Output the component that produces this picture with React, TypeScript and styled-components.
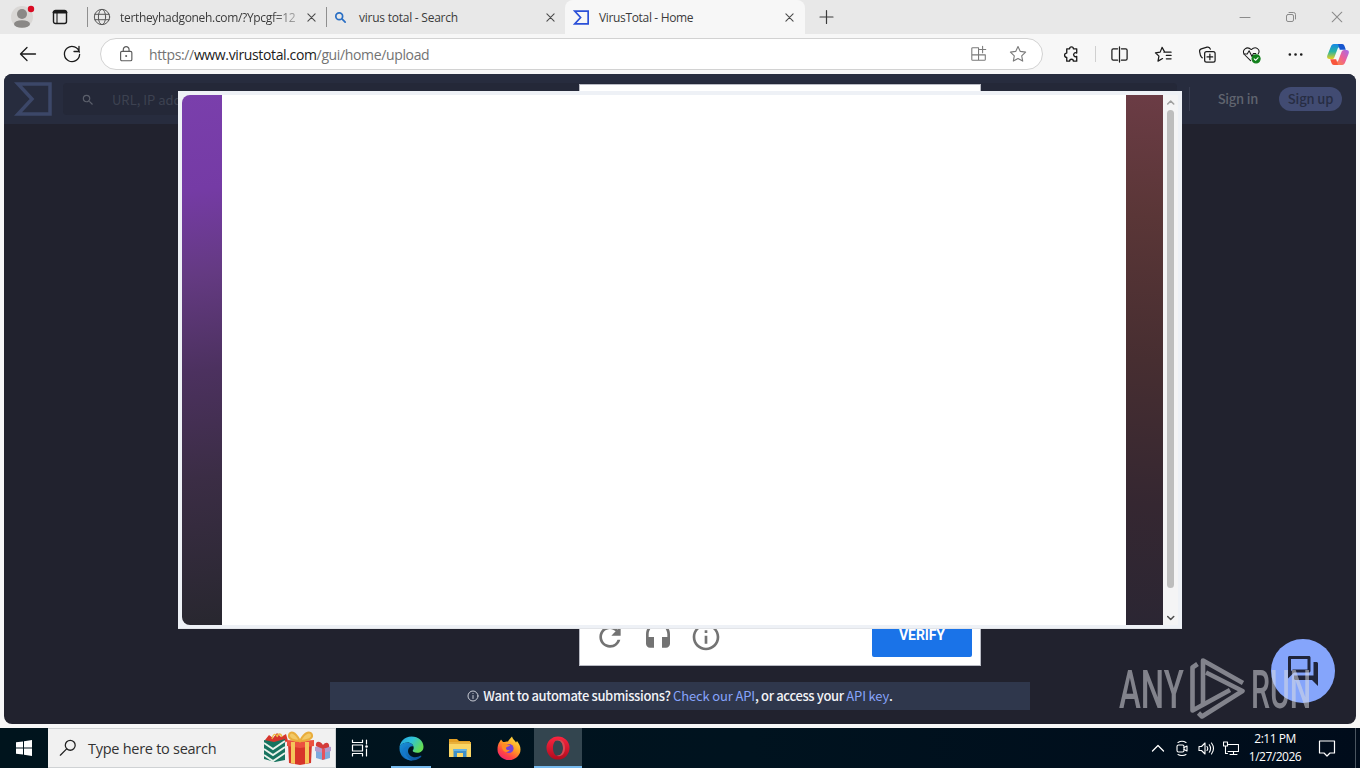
import React from 'react'
import styled, { createGlobalStyle } from 'styled-components'
import { MdHeadset, MdInfoOutline, MdOutlineForum, MdRefresh, MdSearch } from 'react-icons/md'

const GlobalStyle = createGlobalStyle`
  * {
    box-sizing: border-box;
  }
  body {
    margin: 0;
    overflow: hidden;
    font-family: 'Open Sans', 'Noto Sans', sans-serif;
  }
  svg {
    display: block;
    flex-shrink: 0;
  }
`

const Desktop = styled.div`
  position: relative;
  width: 1360px;
  height: 768px;
  display: flex;
  flex-direction: column;
  overflow: hidden;
  background: #f7f7f7;
`

/* ---------- text ---------- */

const Label = styled.span<{ $size?: number; $spacing?: number; $color?: string }>`
  font-size: ${({ $size = 12 }) => $size}px;
  letter-spacing: ${({ $spacing = 0 }) => $spacing}px;
  color: ${({ $color = '#3b3b3b' }) => $color};
  line-height: 20px;
  white-space: nowrap;
`

/* ---------- tab strip ---------- */

const TabStrip = styled.div`
  height: 34px;
  display: flex;
  align-items: center;
  background: #e8e8e8;
`
const StripTools = styled.div`
  width: 87px;
  display: flex;
  align-items: center;
  gap: 16px;
  padding-left: 10px;
`
const Tab = styled.div<{ $width: number; $active?: boolean }>`
  width: ${({ $width }) => $width}px;
  height: 34px;
  display: flex;
  align-items: center;
  padding: 0 ${({ $active }) => ($active ? 11 : 10)}px 0 ${({ $active }) => ($active ? 8 : 5)}px;
  background: ${({ $active }) => ($active ? '#f7f7f7' : 'transparent')};
  border-radius: 8px 8px 0 0;
`
const TabDivider = styled.div`
  width: 1px;
  height: 20px;
  background: #8f8f8f;
`
const TabTitle = styled(Label)<{ $fade?: boolean }>`
  flex: 1;
  margin: 1px 9px 0 ${({ $fade }) => ($fade ? 9 : 10)}px;
  ${({ $fade }) =>
    $fade && 'mask-image: linear-gradient(90deg, #000 85%, rgba(0, 0, 0, 0.3));'}
`
const WindowButtons = styled.div`
  margin-left: auto;
  display: flex;
  align-items: center;
  gap: 34px;
  padding-right: 17px;
`

/* ---------- toolbar ---------- */

const Toolbar = styled.div`
  height: 40px;
  display: flex;
  align-items: center;
  padding: 0 11px 0 18px;
  background: #f7f7f7;
`
const NavButtons = styled.div`
  display: flex;
  gap: 24px;
`
const AddressBar = styled.div`
  width: 943px;
  height: 32px;
  margin-left: 18px;
  display: flex;
  align-items: center;
  padding: 0 14px 0 16px;
  border: 1px solid #d2d2d2;
  border-radius: 16px;
  background: #fff;
`
const Url = styled(Label)`
  flex: 1;
  margin: 1px 0 0 14px;
  b {
    font-weight: 400;
    color: #1b1b1b;
  }
`
const AddressActions = styled.div`
  display: flex;
  align-items: center;
  gap: 20px;
`
const ToolbarIcons = styled.div`
  display: flex;
  align-items: center;
  gap: 25px;
  margin-left: 19px;
  > svg:last-child {
    margin-left: -3px;
  }
`
const ToolbarDivider = styled.div`
  width: 1px;
  height: 16px;
  margin: 0 -11px;
  background: #d0d0d0;
`

/* ---------- page ---------- */

const Page = styled.main`
  height: 650px;
  margin: 0 4px 4px;
  display: flex;
  flex-direction: column;
  align-items: center;
  justify-content: space-between;
  border-radius: 8px;
  overflow: hidden;
  background: #21222e;
  font-family: 'Noto Sans CJK SC', sans-serif;
`
const PageHeader = styled.header`
  width: 100%;
  height: 50px;
  display: flex;
  align-items: center;
  padding: 0 14px 0 10px;
  background: #272c3e;
`
const SearchField = styled.div`
  flex: 1;
  height: 32px;
  margin-left: 11px;
  display: flex;
  align-items: center;
  gap: 17px;
  padding: 1px 0 0 18px;
  border-radius: 4px;
  background: #242838;
`
const HeaderDivider = styled.div`
  width: 1px;
  height: 24px;
  margin-left: 12px;
  background: #363b4e;
`
const HeaderLink = styled.span`
  margin: 0 21px 0 28px;
  font-size: 13px;
  font-weight: 500;
  letter-spacing: -0.25px;
  line-height: 20px;
  color: #60646f;
`
const HeaderButton = styled.span`
  width: 63px;
  height: 24px;
  border-radius: 12px;
  background: #414b72;
  color: #272d43;
  font-size: 13px;
  font-weight: 500;
  letter-spacing: -0.15px;
  line-height: 24px;
  text-align: center;
`
const Banner = styled.div`
  width: 700px;
  height: 28px;
  margin-bottom: 14px;
  display: flex;
  align-items: center;
  justify-content: center;
  gap: 4px;
  background: #2f374c;
  color: #f2f3f7;
  font-size: 13px;
  font-weight: 500;
  line-height: 26px;
  letter-spacing: -0.35px;
  a {
    font-weight: 400;
    letter-spacing: -0.15px;
    color: #87a4fb;
  }
`
const ChatButton = styled.div`
  position: absolute;
  left: 1271px;
  top: 639px;
  width: 64px;
  height: 64px;
  display: flex;
  align-items: center;
  justify-content: center;
  border-radius: 50%;
  background: #85a5fb;
  color: #20253a;
`

/* ---------- overlapping windows ---------- */

const Captcha = styled.div`
  position: absolute;
  left: 579px;
  top: 84px;
  width: 402px;
  height: 582px;
  display: flex;
  align-items: flex-end;
  justify-content: space-between;
  padding: 0 8px 8px 14px;
  border: 1px solid #b9bbc4;
  background: #fff;
`
const CaptchaIcons = styled.div`
  display: flex;
  gap: 16px;
  padding-bottom: 4px;
  color: #737373;
`
const VerifyButton = styled.div`
  width: 100px;
  height: 42px;
  border-radius: 2px;
  background: #1a73e8;
  color: #fff;
  font-family: Roboto, sans-serif;
  font-size: 14px;
  font-weight: 700;
  letter-spacing: -0.1px;
  line-height: 41px;
  text-align: center;
`
const Popup = styled.div`
  position: absolute;
  left: 178px;
  top: 91px;
  width: 1004px;
  height: 538px;
  display: flex;
  padding: 4px;
  background: #eef1f6;
  border-bottom: 1px solid #e2e4e8;
`
const PopupEdge = styled.div<{ $width: number; $left?: boolean }>`
  width: ${({ $width }) => $width}px;
  height: 530px;
  border-radius: ${({ $left }) => ($left ? '8px 0 0 8px' : '0')};
  background: ${({ $left }) =>
    $left
      ? 'linear-gradient(172deg, #7a3fac 0%, #753ba5 18%, #643a82 34%, #4c315f 52%, #3b2d45 72%, #28272f 100%)'
      : 'linear-gradient(184deg, #6b3c45 0%, #5a3637 23%, #472e31 50%, #352731 77%, #2b2633 100%)'};
`
const PopupBody = styled.div`
  flex: 1;
  height: 530px;
  background: #fff;
`
const Scrollbar = styled.div`
  width: 15px;
  height: 530px;
  display: flex;
  flex-direction: column;
  align-items: center;
  padding: 3px 0;
  background: #f4f4f5;
`
const ScrollThumb = styled.div`
  width: 7px;
  height: 478px;
  margin: 4px 0 auto;
  border-radius: 4px;
  background: #bdbdbd;
`
const Watermark = styled.div`
  position: absolute;
  left: 1119px;
  top: 656px;
  width: 194px;
  height: 64px;
  display: flex;
  align-items: center;
  justify-content: space-between;
  opacity: 0.52;
  color: #dcdde2;
`
const WatermarkWord = styled.div<{ $width: number; $scale: number }>`
  width: ${({ $width }) => $width}px;
  padding-top: 3px;
  font-family: Roboto, sans-serif;
  font-size: 53px;
  font-weight: 500;
  line-height: 64px;
  white-space: nowrap;
  transform: scaleX(${({ $scale }) => $scale});
  transform-origin: left center;
`

/* ---------- taskbar ---------- */

const Taskbar = styled.footer`
  height: 40px;
  display: flex;
  align-items: center;
  background: linear-gradient(90deg, #00141d, #00131f 55%, #000c1b);
`
const TaskButton = styled.div<{ $open?: boolean; $active?: boolean }>`
  width: 48px;
  height: 40px;
  margin-right: 1px;
  display: flex;
  align-items: center;
  justify-content: center;
  background: ${({ $active }) => ($active ? '#33454f' : 'transparent')};
  box-shadow: ${({ $open }) => ($open ? 'inset 0 -2px #76b9ed' : 'none')};
`
const StartButton = styled(TaskButton)`
  margin-right: 0;
`
const UnderlinedButton = styled(TaskButton)`
  width: 40px;
  margin: 0 5px 0 6px;
`
const TaskSearch = styled.div`
  width: 288px;
  height: 40px;
  display: flex;
  align-items: center;
  padding: 0 3px 0 11px;
  border: 1px solid #cfd2d4;
  border-left: 0;
  background: #f1f1f1;
`
const SearchText = styled(Label)`
  flex: 1;
  margin: 1px 0 0 11px;
`
const Tray = styled.div`
  margin-left: auto;
  display: flex;
  align-items: center;
  gap: 8px;
`
const Clock = styled.div`
  width: 56px;
  margin-right: 7px;
  display: flex;
  flex-direction: column;
  align-items: center;
  span {
    line-height: 18px;
  }
`
const ShowDesktop = styled.div`
  width: 5px;
  height: 40px;
  margin-left: 11px;
  border-left: 1px solid #4a5560;
`

/* ---------- icons ---------- */

type IconProps = {
  size?: number
  color?: string
  stroke?: number
  box?: number
  children: React.ReactNode
}
const Icon: React.FC<IconProps> = ({
  size = 20,
  color = '#1b1b1b',
  stroke = 1.2,
  box = 20,
  children,
}) => (
  <svg
    width={size}
    height={size}
    viewBox={`0 0 ${box} ${box}`}
    fill="none"
    stroke={color}
    strokeWidth={stroke}
    strokeLinejoin="round"
    strokeLinecap="round"
  >
    {children}
  </svg>
)

const CloseIcon: React.FC<{ size?: number; color?: string; stroke?: number }> = ({
  size = 9,
  color = '#4a4a4a',
  stroke = 1.2,
}) => (
  <Icon size={size} box={10} color={color} stroke={stroke}>
    <path d="M1 1l8 8M9 1l-8 8" />
  </Icon>
)

const Profile = () => (
  <svg width="26" height="26" viewBox="0 0 26 26">
    <circle cx="12" cy="13" r="11" fill="#d9d7d5" />
    <circle cx="12" cy="10" r="5" fill="#8a8886" />
    <ellipse cx="12" cy="20" rx="8" ry="3.8" fill="#8a8886" />
    <circle cx="21" cy="5" r="3.2" fill="#d90b23" />
  </svg>
)

const Sigma: React.FC<{ width: number; height: number; color: string; stroke: number }> = ({
  width,
  height,
  color,
  stroke,
}) => (
  <svg width={width} height={height} viewBox="0 0 38 34" fill="none" stroke={color}>
    <path d="M4 2h32v30H4l14-15z" strokeWidth={stroke} />
  </svg>
)

const Copilot = () => (
  <svg width="22" height="21" viewBox="0 0 22 21">
    <defs>
      <linearGradient id="cpBlue" x1="0" y1="0" x2="0" y2="1">
        <stop offset="0" stopColor="#1688e8" />
        <stop offset="0.5" stopColor="#26b4a4" />
        <stop offset="1" stopColor="#e8cf1c" />
      </linearGradient>
      <linearGradient id="cpPink" x1="1" y1="0" x2="0" y2="1">
        <stop offset="0" stopColor="#a36bef" />
        <stop offset="0.5" stopColor="#ee5f95" />
        <stop offset="1" stopColor="#fc8b3a" />
      </linearGradient>
    </defs>
    <path
      d="M13 0H7C5 0 4.200 1.500 3.600 3.200L.5 11C-.5 13.500.5 15 2.500 15H5c1.500 0 2.200-1 2.700-2.600L10.500 5C11 3.500 12 3 13.500 3z"
      fill="url(#cpBlue)"
    />
    <path d="M11 0h4c1.700 0 2.300 1.200 2.800 2.800l1 3h-6z" fill="#1756cf" />
    <path
      d="M9 21h6c2 0 2.800-1.500 3.400-3.200L21.500 10C22.500 7.500 21.500 6 19.500 6H17c-1.500 0-2.200 1-2.700 2.600L11.500 16C11 17.500 10 18 8.500 18z"
      fill="url(#cpPink)"
    />
    <path d="M11 21H7c-1.700 0-2.300-1.200-2.800-2.800l-1-3h6z" fill="#f8563c" />
  </svg>
)

const Gifts = () => (
  <svg width="70" height="34" viewBox="0 0 70 34">
    <path d="M3 9l4-5 4 3 4-5 4 4 5-3 2 7-6 3H5z" fill="#d6362d" />
    <path
      d="M10 8c1-5 3-6 5-3M15 6c1-4 4-4 5 0"
      fill="none"
      stroke="#efb944"
      strokeWidth="1.300"
    />
    <path d="M2 9l10 2 11-3v21l-10 2-11-3z" fill="#17735f" />
    <path
      d="M2 12l9 6 12-8M2 18l9 6 12-8M2 24l9 6 12-8"
      fill="none"
      stroke="#e9f2ea"
      strokeWidth="1.900"
    />
    <path d="M26 12h24l-1 20-11 2-11-2z" fill="#d7352a" />
    <path d="M25 9l13 1 14-1v6l-14 2-13-2z" fill="#ec5140" />
    <path d="M29 11h4v22l-4-1zM43 11h4v21l-4 1z" fill="#f4c55b" />
    <path
      d="M38 10C33 0 28 0 27 4s5 6 11 6c6 0 13-2 12-6s-7-4-12 6z"
      fill="#f2c966"
      stroke="#e9ad3c"
      strokeWidth="2"
    />
    <path d="M54 17l14 1v9l-7 2-7-2z" fill="#7da9dc" />
    <path d="M53 16l8-2 8 2v4l-8 2-8-2z" fill="#b49acb" />
    <path d="M54 15c-1-5 4-6 7-1 3-4 7-2 6 2l-6 2z" fill="#d43c3b" />
    <path d="M60 18h3v10l-3 1z" fill="#e5525d" />
  </svg>
)

const Edge = () => (
  <svg width="25" height="25" viewBox="0 0 25 25">
    <defs>
      <linearGradient id="edgeTop" x1="0" y1="0" x2="1" y2="0.500">
        <stop offset="0" stopColor="#259fe0" />
        <stop offset="0.500" stopColor="#2fc3da" />
        <stop offset="1" stopColor="#63dc54" />
      </linearGradient>
      <linearGradient id="edgeLow" x1="0" y1="0" x2="1" y2="1">
        <stop offset="0" stopColor="#1a92dc" />
        <stop offset="1" stopColor="#0b4d98" />
      </linearGradient>
    </defs>
    <path
      d="M.5 12.500C.5 5.500 5.500.5 12.500.5c7 0 12 4.600 12 10.200 0 4-3 6-6.300 6-3 0-4.500-1.200-4.500-2 0-.7 1-1.200 1-3C14.700 9 12 6.500 8.500 6.500 4 6.500.5 9.500.5 12.500z"
      fill="url(#edgeTop)"
    />
    <path
      d="M.5 12.500c0-3.500 3.500-6 7.800-6 3 0 5.300 1.500 6.200 4-2-1-5.500.5-5.500 4.500 0 4.500 5 7.500 10 5.800 1.500-.5 2.900-1.300 3.400-.8.500.6-3.600 4.500-9.400 4.500C5.500 24.500.5 19 .5 12.500z"
      fill="url(#edgeLow)"
    />
    <path
      d="M10 10.500c-3.500 2-4.500 6-2.500 9.500 1.300 2.300 3.700 4 6 4.400C7 24.700 2.500 19 4 14c1-2.500 3-3.800 6-3.500z"
      fill="#1479cc"
    />
  </svg>
)

const Folder = () => (
  <svg width="22" height="19" viewBox="0 0 22 19">
    <path d="M0 0h8l2 2h11v4H0z" fill="#e4a024" />
    <path d="M0 3h22v15H0z" fill="#fbd665" />
    <path d="M0 3h22v2H0z" fill="#e9b13c" />
    <path d="M4.500 18v-8h13v8h-3.500v-4H8v4z" fill="#3d8fc9" />
    <path d="M4.500 10h13v2h-13z" fill="#64b3e6" />
  </svg>
)

const Firefox = () => (
  <svg width="24" height="24" viewBox="0 0 24 24">
    <defs>
      <linearGradient id="ffBody" x1="0.850" y1="0" x2="0.200" y2="1">
        <stop offset="0" stopColor="#ffe644" />
        <stop offset="0.450" stopColor="#ff9a24" />
        <stop offset="0.750" stopColor="#ff4444" />
        <stop offset="1" stopColor="#ed1f75" />
      </linearGradient>
    </defs>
    <path
      d="M2.500 6L4 3.500 6 6c2 0 3.500-.5 5-.5C12 3 14 2 15 .5c.5 2.500 3 4 4 6l1-1.500c2 2.500 3.500 5 3.500 8.500A11.500 10.500 0 0 1 .5 13.500C.5 10.500 1 8 2.500 6z"
      fill="url(#ffBody)"
    />
    <circle cx="12" cy="12.500" r="4.600" fill="#7543d8" />
    <path
      d="M5 8c2-1 4-.5 5.500.5L13 9c0 1.500-3.500 1.500-4 3-.3 2 2.500 2.600 4 1.500-1 3-5 3.500-7 .5-1.200-2-1.500-4-1-6z"
      fill="#ff8b22"
    />
  </svg>
)

const Opera = () => (
  <svg width="24" height="24" viewBox="0 0 24 24">
    <defs>
      <linearGradient id="opRing" x1="0" y1="0" x2="0" y2="1">
        <stop offset="0" stopColor="#fb2640" />
        <stop offset="1" stopColor="#b00b1e" />
      </linearGradient>
    </defs>
    <path
      fillRule="evenodd"
      d="M12 .5a11.500 11.500 0 1 0 0 23 11.500 11.500 0 0 0 0-23zM12 4c3 0 5 3.500 5 8s-2 8-5 8-5-3.500-5-8 2-8 5-8z"
      fill="url(#opRing)"
    />
    <path d="M9 5c5-3 10 0 10 7s-5 10-10 7c5 2 8-2 8-7S14 3 9 5z" fill="#d64a52" />
  </svg>
)

const PlayMark = () => (
  <svg
    width="56"
    height="64"
    viewBox="0 0 56 64"
    fill="none"
    stroke="currentColor"
    strokeWidth="4.600"
    strokeLinejoin="round"
  >
    <path d="M14 48V4.500L54 27" />
    <path d="M8.500 8L3.500 11.500V54.500L41 34" />
    <path d="M17 16.500L53.500 35 13 60.500 9.500 57" />
  </svg>
)

/* ---------- app ---------- */

const App: React.FC = () => {
  return (
    <Desktop>
      <GlobalStyle />
      <TabStrip>
        <StripTools>
          <Profile />
          <Icon size={16} box={16} stroke={1.4}>
            <rect x="1.500" y="1.500" width="13" height="13" rx="2" />
            <path d="M2 3.200h12" strokeWidth="2.600" />
            <path d="M5 4v10" strokeWidth="1.100" />
          </Icon>
        </StripTools>
        <TabDivider />
        <Tab $width={238}>
          <Icon size={18} color="#555" stroke={1.1}>
            <circle cx="10" cy="10" r="8.500" />
            <ellipse cx="10" cy="10" rx="4" ry="8.500" />
            <path d="M2 7h16M2 13h16" />
          </Icon>
          <TabTitle $fade $spacing={-0.32}>
            tertheyhadgoneh.com/?Ypcgf=12
          </TabTitle>
          <CloseIcon />
        </Tab>
        <TabDivider />
        <Tab $width={238}>
          <Icon size={17} color="#2a6fc4" stroke={2}>
            <circle cx="8.500" cy="8.500" r="4" />
            <path d="M12 12l3.500 3.500" />
          </Icon>
          <TabTitle $spacing={-0.24}>virus total - Search</TabTitle>
          <CloseIcon />
        </Tab>
        <Tab $width={240} $active>
          <Sigma width={16} height={15} color="#2b50d8" stroke={4} />
          <TabTitle $spacing={-0.34}>VirusTotal - Home</TabTitle>
          <CloseIcon />
        </Tab>
        <Icon size={42} box={42} color="#3b3b3b">
          <path d="M15 21h13M21.500 14.500v13" />
        </Icon>
        <WindowButtons>
          <Icon size={12} box={12} color="#8b8b8b" stroke={1}>
            <path d="M1 6.500h10" />
          </Icon>
          <Icon size={12} box={12} color="#8b8b8b" stroke={1}>
            <rect x="1.500" y="3.500" width="7" height="7" rx="1.500" />
            <path d="M4 1.500h4.500a2 2 0 0 1 2 2V8" />
          </Icon>
          <CloseIcon size={12} color="#8b8b8b" stroke={0.9} />
        </WindowButtons>
      </TabStrip>
      <Toolbar>
        <NavButtons>
          <Icon stroke={1.3}>
            <path d="M17.500 10h-15M9 3.500L2.500 10 9 16.500" />
          </Icon>
          <Icon stroke={1.3}>
            <path d="M17.400 8.200A7.600 7.600 0 1 0 17.600 10.500M17 2.500v5h-5" />
          </Icon>
        </NavButtons>
        <AddressBar>
          <Icon size={18} color="#5c5c5c" stroke={1.3}>
            <rect x="4" y="7" width="12.500" height="10.500" rx="1.500" />
            <path d="M7 7V5a3.200 3.200 0 0 1 6.400 0v2" />
            <circle cx="10.200" cy="12.200" r=".5" />
          </Icon>
          <Url $size={14} $spacing={-0.36} $color="#737373">
            https://<b>www.virustotal.com</b>/gui/home/upload
          </Url>
          <AddressActions>
            <Icon size={18} color="#7a7a7a">
              <path d="M9 3H3a1 1 0 0 0-1 1v12a1 1 0 0 0 1 1h13a1 1 0 0 0 1-1v-5H2M9.500 3v14M14 1.500v7M10.500 5h7" />
            </Icon>
            <Icon color="#7a7a7a" stroke={1.1}>
              <path d="M10 2.500l2.300 4.900 5.300.7-3.900 3.700 1 5.300-4.700-2.600-4.700 2.600 1-5.300-3.900-3.700 5.300-.7z" />
            </Icon>
          </AddressActions>
        </AddressBar>
        <ToolbarIcons>
          <Icon size={19} stroke={1.4}>
            <path d="M5 4h3a2 2 0 0 1 4 0h3.500v4.500a2.100 2.100 0 1 0 0 3.500v5H12a2 2 0 0 0-4 0H5v-4a2.200 2.200 0 0 1 0-4.500z" />
          </Icon>
          <ToolbarDivider />
          <Icon size={19} stroke={1.3}>
            <path d="M8 4H3.500A1.500 1.500 0 0 0 2 5.500v9A1.500 1.500 0 0 0 3.500 16H8M12 4h4.500A1.500 1.500 0 0 1 18 5.500v9a1.500 1.500 0 0 1-1.500 1.500H12M10 2v16" />
          </Icon>
          <Icon size={19} stroke={1.3}>
            <path d="M10.500 7.500H18M13 11h5M13 14.500h5M11 7L8.500 2.500 6.500 7.500l-5 .7 3.700 3.500-1 5.300L9 14.300" />
          </Icon>
          <Icon size={19} stroke={1.3}>
            <rect x="7" y="7" width="11" height="11" rx="2" />
            <path d="M12.500 9.500v6M9.500 12.500h6M4.500 13.500C3.500 13 3 12 2.500 10.500L1.700 7C1.500 5.500 2 4.500 3.500 4l6-1.700c1.500-.4 3 .2 3.500 2" />
          </Icon>
          <Icon size={19} stroke={1.1}>
            <path d="M9 16.500L2.500 10C-.5 5.500 5 .5 9.800 4.800 14.500.5 20 5 17 9.500" />
            <path d="M2 9.500h3.500L7.500 6l3 6 1.500-3h2.500" />
            <circle cx="14.800" cy="14.600" r="4.300" fill="#11801b" stroke="#11801b" />
            <path d="M12.800 14.600l1.500 1.500 2.700-2.700" stroke="#fff" />
          </Icon>
          <Icon size={19} stroke={2.700}>
            <path d="M4 10h.1M10 10h.1M16 10h.1" />
          </Icon>
          <Copilot />
        </ToolbarIcons>
      </Toolbar>

      <Page>
        <PageHeader>
          <Sigma width={38} height={34} color="#3c4768" stroke={3.5} />
          <SearchField>
            <MdSearch size={14} color="#5b5f6b" />
            <Label $size={13} $color="#3d4251">
              URL, IP address, domain or file hash
            </Label>
          </SearchField>
          <HeaderDivider />
          <HeaderLink>Sign in</HeaderLink>
          <HeaderButton>Sign up</HeaderButton>
        </PageHeader>
        <Banner>
          <Icon size={12} box={12} color="#d8dae2" stroke={0.9}>
            <circle cx="6" cy="6" r="5" />
            <path d="M6 5.500v3M6 3.500v.1" />
          </Icon>
          <span>
            Want to automate submissions? <a>Check our API</a>, or access your <a>API key</a>.
          </span>
        </Banner>
      </Page>

      <Taskbar>
        <StartButton>
          <svg width="16" height="16" viewBox="0 0 16 16" fill="#fff">
            <path d="M0 2.300l7-.9v6.100H0zM8 1.200L16 0v7.500H8zM0 8.500h7v6.100l-7-.9zM8 8.500h8V16l-8-1.200z" />
          </svg>
        </StartButton>
        <TaskSearch>
          <Icon size={18} color="#222" stroke={1.4}>
            <circle cx="12.500" cy="7" r="5.500" />
            <path d="M8.500 11L1.500 18" />
          </Icon>
          <SearchText $size={14.5} $spacing={-0.27} $color="#333">
            Type here to search
          </SearchText>
          <Gifts />
        </TaskSearch>
        <TaskButton>
          <Icon size={18} color="#fff" stroke={1.2} box={18}>
            <path d="M1.500 1v2.500h10V1M1.500 17v-2.500h10V17M1.500 6h10v6h-10zM15.500 1v4M15.500 10v7" />
            <path d="M15.500 7.500h.1" strokeWidth="2.500" />
          </Icon>
        </TaskButton>
        <UnderlinedButton $open>
          <Edge />
        </UnderlinedButton>
        <TaskButton>
          <Folder />
        </TaskButton>
        <TaskButton>
          <Firefox />
        </TaskButton>
        <TaskButton $open $active>
          <Opera />
        </TaskButton>
        <Tray>
          <Icon size={16} box={16} color="#fff" stroke={1.3}>
            <path d="M2.500 11L8 5.500l5.500 5.500" />
          </Icon>
          <Icon size={16} box={16} color="#fff" stroke={1.1}>
            <rect x="3" y="5" width="7" height="7" rx="1.500" />
            <path d="M10 7.500l3-1.500v5l-3-1.500M4 2.500q4-2.500 8 0M4 14.500q4 2 8 0" />
          </Icon>
          <Icon size={17} box={17} color="#fff" stroke={1.1}>
            <path d="M1 6.500h2.500L7 3v11l-3.500-3.500H1zM9 6.500q1.500 2 0 4M11.300 4.800q2.500 3.700 0 7.400M13.500 3q4 5.500 0 11" />
          </Icon>
          <Icon size={16} box={16} color="#fff" stroke={1.1}>
            <path d="M5.500 4.500h10v7H5M10.500 11.500V14M7 14.500h7M.5 2h4v4h-4zM2.500 6v7.500h2" />
          </Icon>
          <Clock>
            <Label $spacing={-0.5} $color="#fff">
              2:11 PM
            </Label>
            <Label $spacing={-0.5} $color="#fff">
              1/27/2026
            </Label>
          </Clock>
          <Icon size={18} box={18} color="#fff" stroke={1.2}>
            <path d="M1.500 2h15v12H12l-3 3-3-3H1.500z" />
          </Icon>
          <ShowDesktop />
        </Tray>
      </Taskbar>

      <Captcha>
        <CaptchaIcons>
          <MdRefresh size={32} />
          <MdHeadset size={32} />
          <MdInfoOutline size={32} />
        </CaptchaIcons>
        <VerifyButton>VERIFY</VerifyButton>
      </Captcha>
      <Popup>
        <PopupEdge $width={40} $left />
        <PopupBody />
        <PopupEdge $width={37} />
        <Scrollbar>
          <Icon size={8} box={8} color="#a0a0a0" stroke={1.6}>
            <path d="M.7 6l3-3 3 3" />
          </Icon>
          <ScrollThumb />
          <Icon size={8} box={8} color="#505050" stroke={1.6}>
            <path d="M.7 2.500l3 3 3-3" />
          </Icon>
        </Scrollbar>
      </Popup>
      <ChatButton>
        <MdOutlineForum size={36} />
      </ChatButton>
      <Watermark>
        <WatermarkWord $width={64} $scale={0.62}>
          ANY
        </WatermarkWord>
        <PlayMark />
        <WatermarkWord $width={62} $scale={0.57}>
          RUN
        </WatermarkWord>
      </Watermark>
    </Desktop>
  )
}

export default App
